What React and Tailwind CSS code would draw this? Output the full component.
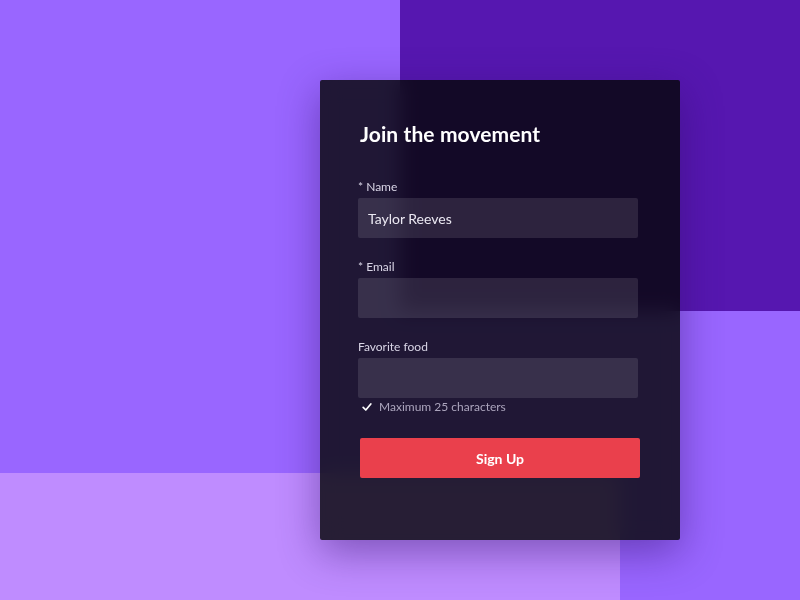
import React, { useState } from 'react';

function Field({ label, value, onChange }) {
    return (
        <div className="flex flex-col">
            <label className="text-[12px] leading-[18px] text-[#d9d5e6] mb-[2px]">{label}</label>
            <input
                value={value}
                onChange={(e) => onChange(e.target.value)}
                className="h-10 w-full rounded-[2px] bg-white/[0.11] px-[10px] text-[14px] leading-5 text-[#ebe8f2] outline-none"
            />
        </div>
    );
}

export default function App() {
    const [name, setName] = useState('Taylor Reeves');
    const [email, setEmail] = useState('');
    const [food, setFood] = useState('');

    return (
        <div className="grid h-[600px] w-[800px] overflow-hidden font-['Lato',sans-serif]">
            {/* Background blocks */}
            <div className="[grid-area:1/1] grid grid-cols-[400px_220px_180px] grid-rows-[311px_162px_127px] bg-[#9966ff]">
                <div className="col-start-2 col-span-2 row-start-1 bg-[#5617b0]" />
                <div className="col-start-1 col-span-2 row-start-3 bg-[#bf8cff]" />
            </div>

            {/* Form card */}
            <div className="[grid-area:1/1] pl-[320px] pt-[80px]">
                <div className="flex h-[460px] w-[360px] flex-col rounded-[2px] bg-[rgba(5,6,8,0.82)] pl-[38px] pr-[42px] pt-10 shadow-[0_12px_40px_rgba(45,10,100,0.45)] backdrop-blur-[10px]">
                    <h1 className="ml-[2px] text-[21px] leading-7 font-bold tracking-[0.1px] text-white">Join the movement</h1>

                    <div className="mt-[30px] flex flex-col gap-5">
                        <Field label="* Name" value={name} onChange={setName} />
                        <Field label="* Email" value={email} onChange={setEmail} />
                        <div className="flex flex-col">
                            <Field label="Favorite food" value={food} onChange={setFood} />
                            <div className="mt-[1px] flex items-center gap-[7px] pl-1">
                                <svg width="10" height="10" viewBox="0 0 10 10" fill="none">
                                    <path d="M1.2 5.4 L3.8 8 L8.8 2" stroke="#ffffff" strokeWidth="1.7" strokeLinecap="round" strokeLinejoin="round" />
                                </svg>
                                <span className="text-[12px] leading-4 text-[#aca5bd]">Maximum 25 characters</span>
                            </div>
                        </div>
                    </div>

                    <button className="mt-[23px] ml-[2px] h-10 w-[280px] rounded-[2px] bg-[#ea404c] text-[14px] font-bold text-white">
                        Sign Up
                    </button>
                </div>
            </div>
        </div>
    );
}
